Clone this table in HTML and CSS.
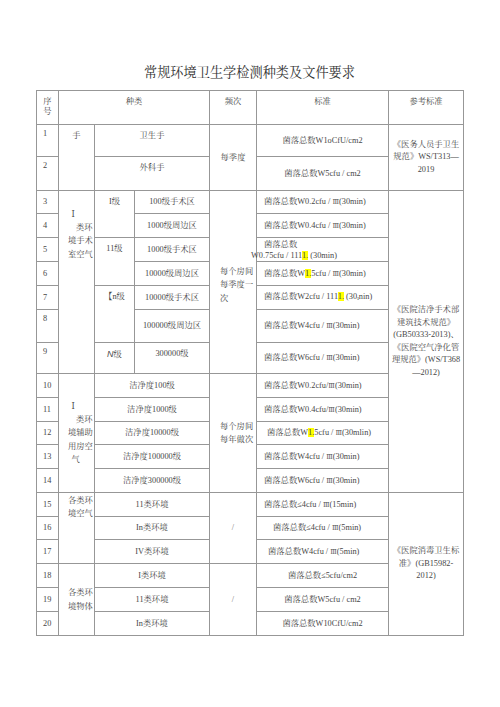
FILE: index.html
```html
<!DOCTYPE html>
<html lang="zh-CN">
<head>
<meta charset="utf-8">
<title>常规环境卫生学检测种类及文件要求</title>
<link rel="stylesheet" href="styles.css">
</head>
<body>
<div class="page">
  <h1 class="title">常规环境卫生学检测种类及文件要求</h1>
  <table class="grid">
    <colgroup>
      <col class="w22"><col class="w36"><col class="w40"><col class="w75"><col class="w47"><col class="w132"><col class="w75">
    </colgroup>
    <tr class="h34 head">
      <td>序<br>号</td>
      <td colspan="3">种类</td>
      <td>频次</td>
      <td>标准</td>
      <td>参考标准</td>
    </tr>
    <tr class="h32">
      <td class="n tall">1</td>
      <td rowspan="2" class="t">手</td>
      <td colspan="2" class="t">卫生手</td>
      <td rowspan="2">每季度</td>
      <td>菌落总数W1oCfU/cm2</td>
      <td rowspan="2" class="ref">《医务人员手卫生<br>规范》WS/T313—<br>2019</td>
    </tr>
    <tr class="h34">
      <td class="n tall">2</td>
      <td colspan="2" class="t">外科手</td>
      <td>菌落总数W5cfu / cm2</td>
    </tr>
    <tr class="h23">
      <td class="n">3</td>
      <td rowspan="7" class="cat cat1"><span class="i1">Ⅰ</span><br><span class="i2">类环</span><br>境手术<br>室空气</td>
      <td rowspan="2" class="t">I级</td>
      <td>100级手术区</td>
      <td rowspan="7" class="freq freq1">每个房间<br>每季度一<br>次</td>
      <td class="std">菌落总数W0.2cfu / <span class="rn">Ⅲ</span>(30min)</td>
      <td rowspan="12" class="ref">《医院洁净手术部<br>建筑技术规范》<br>(GB50333-2013)、<br>《医院空气净化管<br>理规范》(WS/T368<br>—2012)</td>
    </tr>
    <tr class="h24">
      <td class="n">4</td>
      <td>1000级周边区</td>
      <td class="std">菌落总数W0.4cfu / <span class="rn">Ⅲ</span>(30min)</td>
    </tr>
    <tr class="h24">
      <td class="n">5</td>
      <td rowspan="2" class="t">11级</td>
      <td>1000级手术区</td>
      <td class="std two">菌落总数<br><span class="out">W0.75cfu / 111<span class="hl">1.</span> (30min)</span></td>
    </tr>
    <tr class="h24">
      <td class="n">6</td>
      <td>10000级周边区</td>
      <td class="std">菌落总数W<span class="hl">1.</span>5cfu / <span class="rn">Ⅲ</span>(30min)</td>
    </tr>
    <tr class="h24">
      <td class="n">7</td>
      <td rowspan="2" class="t"><span class="brk">【</span>n级</td>
      <td>10000级手术区</td>
      <td class="std">菌落总数W2cfu / 111<span class="hl">1.</span> (30<span class="lo">ı</span>nin)</td>
    </tr>
    <tr class="h33">
      <td class="n tall">8</td>
      <td>100000级周边区</td>
      <td class="std">菌落总数W4cfu / <span class="rn">Ⅲ</span>(30min)</td>
    </tr>
    <tr class="h31">
      <td class="n tall">9</td>
      <td class="t"><i class="nn">N</i>级</td>
      <td class="t">300000级</td>
      <td class="std">菌落总数W6cfu / <span class="rn">Ⅲ</span>(30min)</td>
    </tr>
    <tr class="h24">
      <td class="n">10</td>
      <td rowspan="5" class="cat cat2"><span class="i1">Ⅰ</span><br><span class="i2">类环</span><br>境辅助<br>用房空<br><span class="i1">气</span></td>
      <td colspan="2">洁净度100级</td>
      <td rowspan="5" class="freq freq2">每个房间<br>每年做次</td>
      <td class="std">菌落总数W0.2cfu/<span class="rn">Ⅲ</span>(30min)</td>
    </tr>
    <tr class="h24">
      <td class="n">11</td>
      <td colspan="2">洁净度1000级</td>
      <td class="std">菌落总数W0.4cfu/<span class="rn">Ⅲ</span>(30min)</td>
    </tr>
    <tr class="h23">
      <td class="n">12</td>
      <td colspan="2">洁净度10000级</td>
      <td class="std s3">菌落总数W<span class="hl">1.</span>5cfu / <span class="rn">Ⅲ</span>(30mlin)</td>
    </tr>
    <tr class="h24">
      <td class="n">13</td>
      <td colspan="2">洁净度100000级</td>
      <td class="std">菌落总数W4cfu / <span class="rn">Ⅲ</span>(30min)</td>
    </tr>
    <tr class="h24">
      <td class="n">14</td>
      <td colspan="2">洁净度300000级</td>
      <td class="std">菌落总数W6cfu / <span class="rn">Ⅲ</span>(30min)</td>
    </tr>
    <tr class="h24">
      <td class="n">15</td>
      <td rowspan="3" class="cat cat3">各类环<br>境空气</td>
      <td colspan="2">11类环境</td>
      <td rowspan="3" class="slash">/</td>
      <td class="std">菌落总数≤4cfu / <span class="rn">Ⅲ</span>(15min)</td>
      <td rowspan="6" class="ref">《医院消毒卫生标<br>准》(GB15982-<br>2012)</td>
    </tr>
    <tr class="h23">
      <td class="n">16</td>
      <td colspan="2">In类环境</td>
      <td class="std s16">菌落总数≤4cfu / <span class="rn">Ⅲ</span>(5min)</td>
    </tr>
    <tr class="h24">
      <td class="n">17</td>
      <td colspan="2">IV类环境</td>
      <td class="std s4">菌落总数W4cfu / <span class="rn">Ⅲ</span>(5min)</td>
    </tr>
    <tr class="h24">
      <td class="n">18</td>
      <td rowspan="3" class="cat cat4">各类环<br>境物体</td>
      <td colspan="2">I类环境</td>
      <td rowspan="3" class="slash">/</td>
      <td>菌落总数≤5cfu/cm2</td>
    </tr>
    <tr class="h24">
      <td class="n">19</td>
      <td colspan="2">11类环境</td>
      <td>菌落总数W5cfu / cm2</td>
    </tr>
    <tr class="h24">
      <td class="n">20</td>
      <td colspan="2">In类环境</td>
      <td>菌落总数W10CfU/cm2</td>
    </tr>
  </table>
</div>
</body>
</html>
```

FILE: styles.css
```css
* { box-sizing: border-box; }

body {
  margin: 0;
  background: #ffffff;
}

.page {
  padding: 65px 0 0 36px;
  font-family: "Liberation Serif", "DejaVu Serif", "Noto Serif CJK SC", "Noto Sans CJK SC", serif;
  color: #474747;
}

.title {
  width: 427px;
  margin: 0 0 9px;
  text-align: center;
  font-size: 13.2px;
  line-height: 16px;
  font-weight: normal;
  color: #333333;
}

.grid {
  border-collapse: collapse;
  table-layout: fixed;
  width: 427px;
  font-size: 8.3px;
  line-height: 12px;
}

.w22 { width: 22px; }
.w36 { width: 36px; }
.w40 { width: 40px; }
.w75 { width: 75px; }
.w47 { width: 47px; }
.w132 { width: 132px; }

.grid td {
  border: 1px solid #979797;
  padding: 0 1px;
  text-align: center;
  vertical-align: middle;
  white-space: nowrap;
  overflow: visible;
}

.h23 { height: 23px; }
.h24 { height: 24px; }
.h31 { height: 31px; }
.h32 { height: 32px; }
.h33 { height: 33px; }
.h34 { height: 34px; }

.head td {
  vertical-align: top;
  padding-top: 6px;
  line-height: 10px;
}

.grid td.t {
  vertical-align: top;
  padding-top: 5px;
}

.grid td.n {
  text-align: left;
  padding-left: 6px;
}

.grid td.n.tall {
  vertical-align: top;
  padding-top: 3px;
}

.grid td.cat {
  text-align: left;
  padding-left: 9px;
  line-height: 13.2px;
}

.grid td.cat1 {
  vertical-align: top;
  padding-top: 17px;
}

.grid td.cat3 {
  vertical-align: top;
  padding-top: 1px;
  line-height: 13px;
}

.i1 { padding-left: 3.5px; }
.i2 { padding-left: 8px; }

.grid td.freq {
  text-align: left;
  padding-left: 10px;
  line-height: 13.5px;
}

.grid td.freq1 { padding-top: 6px; }
.grid td.freq2 { line-height: 13px; }

.grid td.std {
  text-align: left;
  padding-left: 7px;
}

.grid td.std.two {
  line-height: 11px;
}

.grid td.s3 { padding-left: 10px; }
.grid td.s16 { padding-left: 16px; }
.grid td.s4 { padding-left: 11px; }

.out {
  margin-left: -13px;
}

.rn {
  font-size: 6.8px;
  color: #5a5a5a;
}

.hl { background: #ffff00; }

.lo {
  font-size: 6px;
  vertical-align: -1px;
}

.brk { font-weight: bold; }

.nn {
  font-family: "Liberation Sans", sans-serif;
  font-size: 9px;
}

.grid td.ref {
  line-height: 12.5px;
}

.grid td.slash {
  color: #777777;
}
```
